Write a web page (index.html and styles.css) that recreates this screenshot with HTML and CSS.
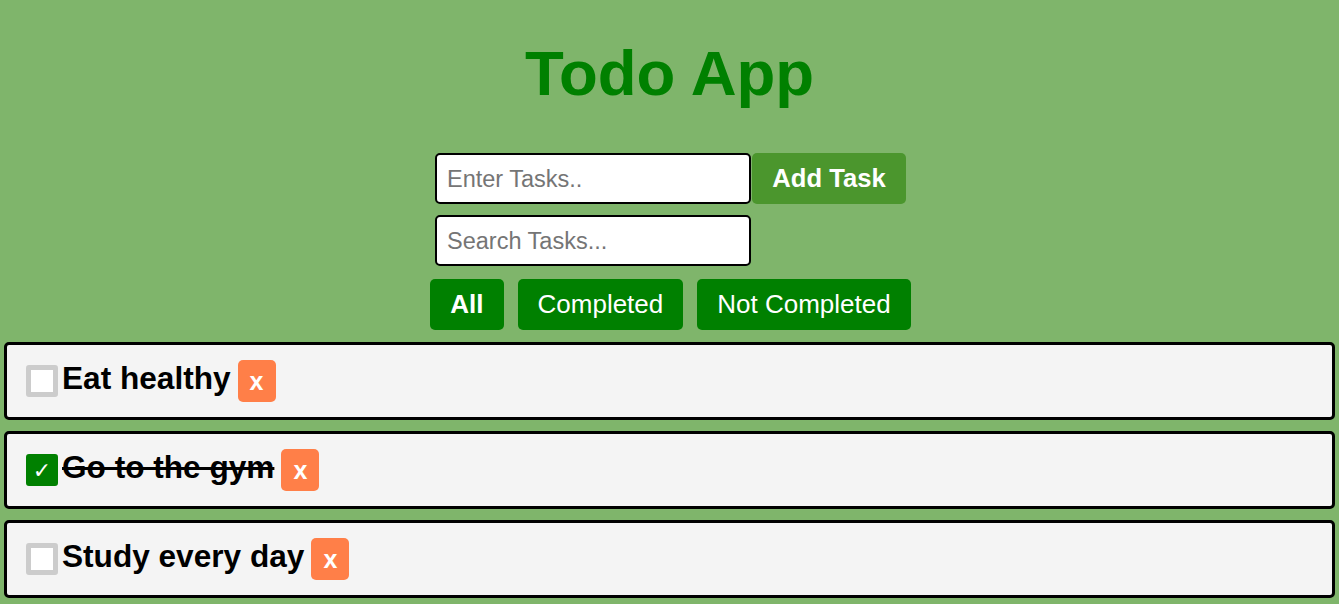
FILE: index.html
```html
<!DOCTYPE html>
<html lang="en">
<head>
<meta charset="utf-8">
<title>Todo App</title>
<link rel="stylesheet" href="styles.css">
</head>
<body>
<h1 class="title">Todo App</h1>
<div class="controls">
  <div class="form">
    <div class="add-row">
      <input class="field" type="text" placeholder="Enter Tasks..">
      <button class="add-btn">Add Task</button>
    </div>
    <input class="field" type="text" placeholder="Search Tasks...">
  </div>
  <div class="filters">
    <button class="filter active">All</button>
    <button class="filter">Completed</button>
    <button class="filter">Not Completed</button>
  </div>
</div>
<ul class="tasks">
  <li class="task">
    <span class="check"></span>
    <span class="task-text">Eat healthy</span>
    <button class="del">x</button>
  </li>
  <li class="task">
    <span class="check checked">✓</span>
    <span class="task-text done">Go to the gym</span>
    <button class="del">x</button>
  </li>
  <li class="task">
    <span class="check"></span>
    <span class="task-text">Study every day</span>
    <button class="del">x</button>
  </li>
</ul>
</body>
</html>
```

FILE: styles.css
```css
* { box-sizing: border-box; }
html, body { margin: 0; padding: 0; }
body {
  background: #7fb56b;
  font-family: "Liberation Sans", Arial, sans-serif;
  padding: 0 4px;
}
.title {
  margin: 0;
  padding-top: 33px;
  height: 153px;
  text-align: center;
  color: #008000;
  font-size: 63.5px;
  font-weight: bold;
  line-height: 80px;
}
.controls {
  display: flex;
  flex-direction: column;
  align-items: center;
}
.form {
  display: flex;
  flex-direction: column;
  align-items: flex-start;
  gap: 11px;
  padding-left: 2px;
}
.add-row { display: flex; gap: 1px; }
.field {
  width: 316px;
  height: 51px;
  border: 2px solid #000;
  border-radius: 5px;
  padding: 2px 10px 0;
  font-family: "Liberation Sans", Arial, sans-serif;
  font-size: 23.5px;
  background: #fff;
  outline: none;
}
.field::placeholder { color: #757575; }
.add-btn {
  width: 154px;
  height: 51px;
  border: none;
  border-radius: 5px;
  background: #4b962d;
  color: #fff;
  font-family: "Liberation Sans", Arial, sans-serif;
  font-size: 25.6px;
  font-weight: bold;
  padding: 0;
}
.filters {
  display: flex;
  gap: 14px;
  margin-top: 13px;
  padding-left: 2px;
}
.filter {
  height: 51px;
  padding: 0 20px;
  border: none;
  border-radius: 5px;
  background: #008000;
  color: #fff;
  font-family: "Liberation Sans", Arial, sans-serif;
  font-size: 26px;
}
.filter.active { font-weight: bold; }
.tasks {
  list-style: none;
  margin: 12px 0 0;
  padding: 0;
  display: flex;
  flex-direction: column;
  gap: 11px;
}
.task {
  height: 78px;
  border: 3px solid #000;
  border-radius: 5px;
  background: #f4f4f4;
  display: flex;
  align-items: center;
  padding: 0 19px;
}
.check {
  width: 32px;
  height: 32px;
  border: 5px solid #cccccc;
  border-radius: 3px;
  background: #fff;
  margin-right: 4px;
  display: flex;
  align-items: center;
  justify-content: center;
  color: #fff;
  font-size: 22px;
  font-family: "DejaVu Sans", sans-serif;
  flex-shrink: 0;
}
.check.checked {
  background: #008000;
  border-color: #008000;
}
.task-text {
  font-size: 31.6px;
  font-weight: bold;
  color: #000;
  position: relative;
  top: -3px;
}
.task-text.done { text-decoration: line-through; }
.del {
  margin-left: 7px;
  width: 38px;
  height: 42px;
  border: none;
  border-radius: 5px;
  background: #ff7f48;
  color: #fff;
  font-family: "Liberation Sans", Arial, sans-serif;
  font-size: 25px;
  font-weight: bold;
  padding: 0;
}
```
